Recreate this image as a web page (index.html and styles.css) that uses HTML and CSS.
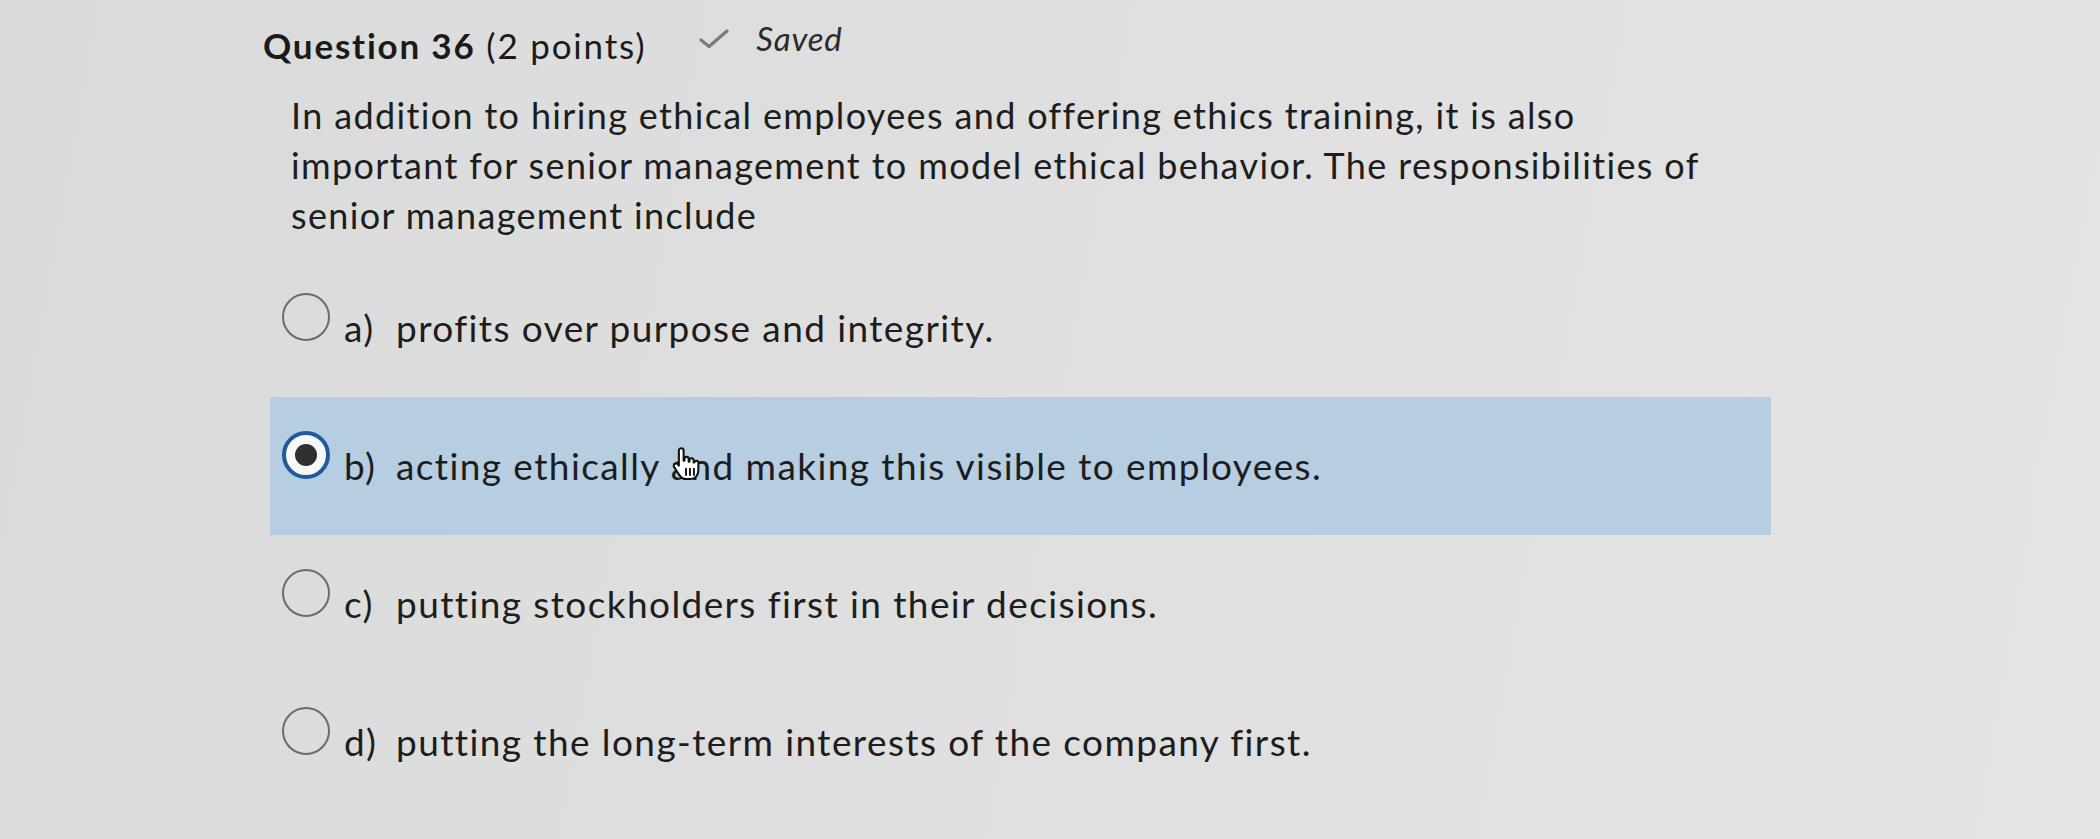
FILE: index.html
```html
<!DOCTYPE html>
<html lang="en">
<head>
<meta charset="utf-8">
<title>Question 36</title>
<link rel="stylesheet" href="styles.css">
</head>
<body>
<div class="page">
  <div class="header">
    <h1 class="title"><strong>Question 36</strong> (2 points)</h1>
    <div class="saved">
      <svg class="check" viewBox="0 0 30 19" aria-hidden="true"><path d="M2 11 L10 17.5 L28 2" fill="none" stroke="#7a7a7a" stroke-width="3.2" stroke-linecap="round" stroke-linejoin="round"/></svg>
      <em class="saved-text">Saved</em>
    </div>
  </div>
  <p class="prompt">In addition to hiring ethical employees and offering ethics training, it is also important for senior management to model ethical behavior. The responsibilities of senior management include</p>
  <ul class="options">
    <li class="option"><span class="radio"></span><span class="letter">a)</span><span class="text">profits over purpose and integrity.</span></li>
    <li class="option selected"><span class="radio"></span><span class="letter">b)</span><span class="text">acting ethically <span class="hover-word">and<svg class="cursor" viewBox="0 0 20 24" aria-hidden="true"><path d="M7 2C7.8 2 8.5 2.7 8.5 3.5L8.5 10L9 10L9 8.8C9 8 9.7 7.5 10.4 7.5C11.1 7.5 11.7 8 11.7 8.8L11.7 10.5L12.2 10.5L12.2 9.6C12.2 8.9 12.8 8.4 13.5 8.4C14.2 8.4 14.8 8.9 14.8 9.6L14.8 11L15.3 11C15.3 10.4 15.9 10 16.5 10C17.2 10 17.8 10.5 17.8 11.2L17.8 16C17.8 19 16 21.5 13 21.5L10 21.5C8 21.5 6.8 20.5 5.8 19L2.5 14C2 13.2 2.3 12.3 3 11.9C3.7 11.5 4.6 11.7 5.1 12.4L5.5 13L5.5 3.5C5.5 2.7 6.2 2 7 2Z" fill="#fff" stroke="#111" stroke-width="1.3" stroke-linejoin="round"/><path d="M10 15V19M12.5 15V19M15 15V19" stroke="#111" stroke-width="1.2" stroke-linecap="round"/></svg></span> making this visible to employees.</span></li>
    <li class="option"><span class="radio"></span><span class="letter">c)</span><span class="text">putting stockholders first in their decisions.</span></li>
    <li class="option"><span class="radio"></span><span class="letter">d)</span><span class="text">putting the long-term interests of the company first.</span></li>
  </ul>
</div>
</body>
</html>
```

FILE: styles.css
```css
html, body {
  margin: 0;
  padding: 0;
}

body {
  width: 2100px;
  height: 839px;
  overflow: hidden;
  background: linear-gradient(100deg, #d9dbda 0%, #dedfde 45%, #e3e4e3 100%);
  font-family: Lato, "Open Sans", "Liberation Sans", sans-serif;
  font-variant-ligatures: none;
  color: #1d1d1d;
}

.page {
  box-sizing: border-box;
  height: 839px;
  padding: 24px 0 0 263px;
}

.header {
  display: flex;
  align-items: flex-start;
}

.title {
  margin: 0;
  font-size: 35px;
  font-weight: 400;
  line-height: 1.2;
  letter-spacing: 1.8px;
  color: #1a1a1a;
}

.title strong {
  font-weight: 700;
}

.saved {
  display: flex;
  align-items: flex-start;
  margin-left: 53px;
  margin-top: -5px;
}

.check {
  width: 30px;
  height: 19px;
  margin-top: 10px;
  flex: none;
}

.saved-text {
  margin-left: 27px;
  font-size: 33px;
  font-style: italic;
  line-height: 1.2;
  letter-spacing: 0.8px;
  color: #2a2a2a;
}

.prompt {
  margin: 24px 0 0 28px;
  width: 1440px;
  font-size: 36px;
  line-height: 50px;
  letter-spacing: 1.35px;
  color: #1d1d1d;
}

.options {
  list-style: none;
  margin: 19px 0 0 7px;
  padding: 0;
  width: 1501px;
}

.option {
  display: flex;
  align-items: center;
  height: 138px;
  padding-left: 12px;
  font-size: 37px;
  line-height: 50px;
  letter-spacing: 1.4px;
  color: #1d1d1d;
}

.option.selected {
  background: #b6cde2;
}

.radio {
  flex: none;
  box-sizing: border-box;
  width: 48px;
  height: 48px;
  border: 2px solid #6b6b6b;
  border-radius: 50%;
  margin-bottom: 22px;
}

.selected .radio {
  display: flex;
  align-items: center;
  justify-content: center;
  border: 4px solid #1f5a9c;
  background: #f7f8f8;
}

.selected .radio::after {
  content: "";
  width: 22px;
  height: 22px;
  border-radius: 50%;
  background: #2f2f2f;
}

.letter {
  flex: none;
  width: 52px;
  margin-left: 14px;
}

.hover-word {
  position: relative;
}

.cursor {
  position: absolute;
  left: -2px;
  top: 2px;
  width: 34px;
  height: 38px;
}
```
